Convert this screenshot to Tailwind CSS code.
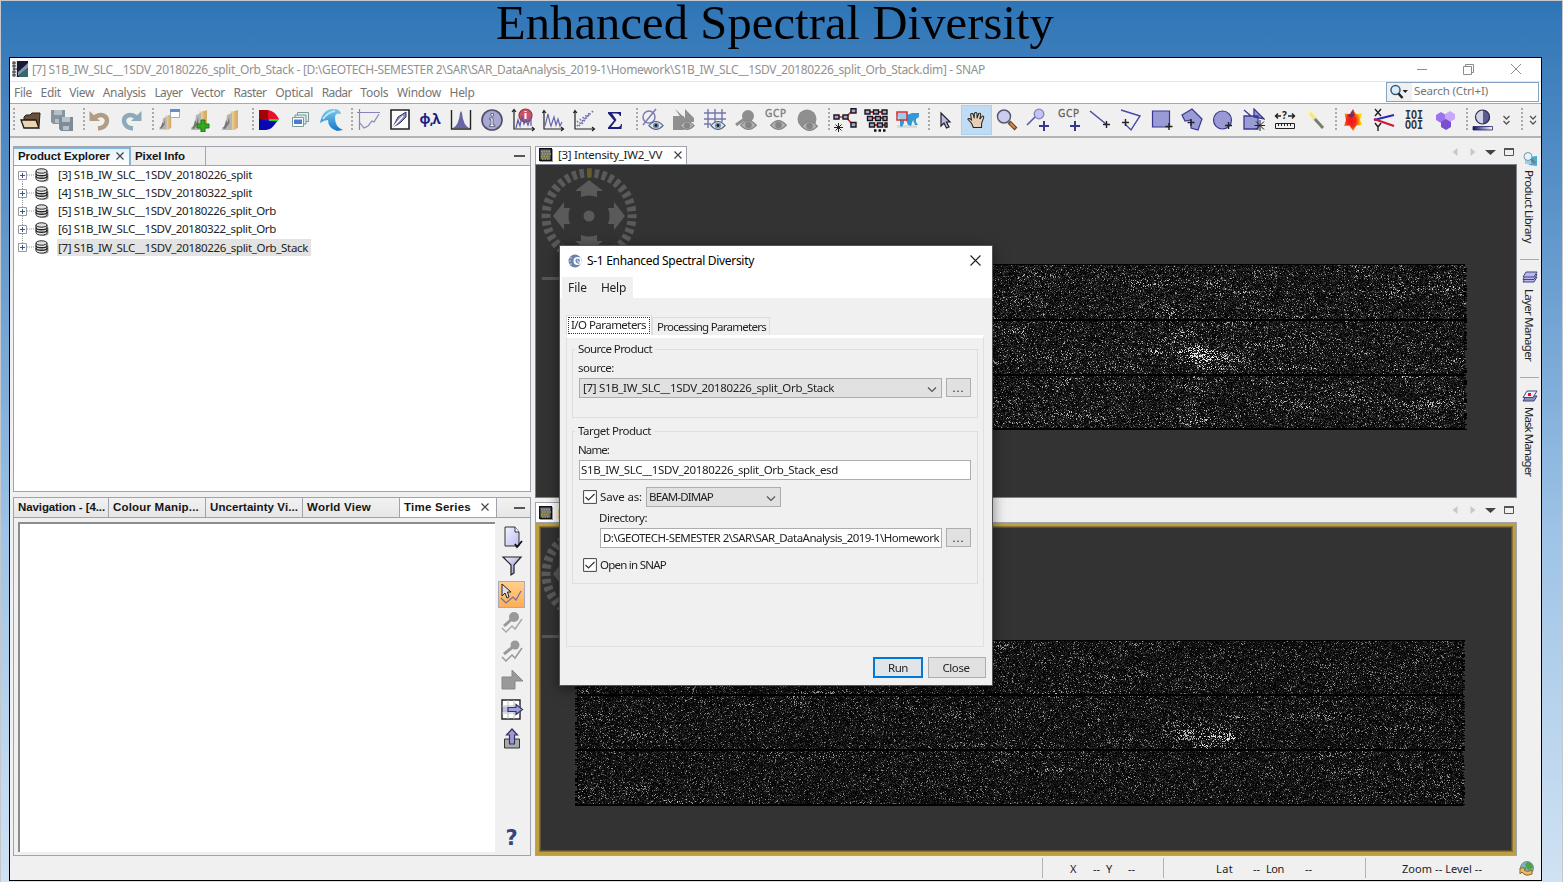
<!DOCTYPE html>
<html lang="en">
<head>
<meta charset="utf-8">
<title>Enhanced Spectral Diversity</title>
<script src="https://cdn.jsdelivr.net/npm/@tailwindcss/browser@4"></script>
</head>
<body class="h-[882px] w-[1563px] overflow-hidden font-['Noto_Sans','Open_Sans',sans-serif] text-[11.5px] text-[#222] whitespace-nowrap">
<svg class="absolute h-0 w-0">
  <defs>
    <linearGradient id="fold" x1="0" y1="0" x2="1" y2="0"><stop offset="0" stop-color="#f5deb0"/><stop offset="1" stop-color="#d9b06a"/></linearGradient>
    <linearGradient id="lav" x1="0" y1="0" x2="1" y2="1"><stop offset="0" stop-color="#f4f4ff"/><stop offset="1" stop-color="#8888c8"/></linearGradient>
    <linearGradient id="page" x1="0" y1="0" x2="1" y2="1"><stop offset="0" stop-color="#f4f4ff"/><stop offset="1" stop-color="#bcbcf0"/></linearGradient>
    <linearGradient id="bar" x1="0" y1="0" x2="1" y2="0"><stop offset="0" stop-color="#0b0b6a"/><stop offset="1" stop-color="#fff"/></linearGradient>
    <linearGradient id="wavec" x1="0" y1="0" x2="0" y2="1"><stop offset="0" stop-color="#7cc8f0"/><stop offset="1" stop-color="#1478c8"/></linearGradient>
    <radialGradient id="star" cx=".4" cy=".55" r=".55"><stop offset="0" stop-color="#f01020"/><stop offset=".5" stop-color="#f03018"/><stop offset="1" stop-color="#ffd800"/></radialGradient>
  </defs>
  <symbol id="eye" viewBox="0 0 14 10"><path d="M.5 5.2Q7-2.5 13.5 5.2Q7 12 .5 5.2Z" fill="#dfe8f0" stroke="#50667e"/><circle cx="7" cy="5" r="2.8" fill="#7d96b0"/><circle cx="7" cy="5" r="1.3" fill="#10202e"/></symbol>
  <symbol id="eyeg" viewBox="0 0 14 10"><path d="M.5 5.2Q7-2.5 13.5 5.2Q7 12 .5 5.2Z" fill="#b0b0b0" stroke="#858585"/><circle cx="7" cy="5" r="2.8" fill="#858585"/></symbol>
  <symbol id="db" viewBox="0 0 14 14"><path d="M3 4Q13 8 13.500 5V12Q12 15 5 13Z" fill="#999"/><path d="M1 3V10.500C1 14 12 14 12 10.500V3Z" fill="#e8e8e8" stroke="#222"/><path d="M1 5.500C1 8.500 12 8.500 12 5.500M1 8C1 11 12 11 12 8" fill="none" stroke="#222" stroke-width="1.300"/><ellipse cx="6.500" cy="3" rx="5.500" ry="2.200" fill="#ddd" stroke="#222"/></symbol>
  <symbol id="prod" viewBox="0 0 14 14"><path d="M1 1H14V14H1Z" fill="#999"/><path d="M.7.7H12.300V12.300H.7Z" fill="#6c6c88" stroke="#111" stroke-width="1.400"/><path d="M2 3.500H11M3 6H12M2 8.500H10M3 11H11" stroke="#a9a43a" stroke-width="1.300" stroke-dasharray="1.5 1"/></symbol>
  <symbol id="folder3" viewBox="0 0 24 24"><path d="M13 4L19 2V20L13 22Z" fill="#d6ad6c"/><path d="M11 3L17 4.500V21.500L11 22Z" fill="url(#fold)"/><path d="M3 21Q7 19 8 7L13 5V22H3Z" fill="#b5b5b5"/><path d="M3 20Q6 19 7 12L8.500 15L10 9L10.500 15L6 21Z" fill="#777"/></symbol>
  <symbol id="compass" viewBox="0 0 96 96">
    <circle cx="48" cy="48" r="43" fill="none" stroke="#5a5a5a" stroke-width="9" stroke-dasharray="4.4 3.105" stroke-dashoffset="2.2"/>
    <path d="M46 .5H50.500V9.500H46Z" fill="#665a28"/>
    <g fill="#5a5a5a"><path id="arr" d="M48 12L62 23H56V29Q48 26 40 29V23H34Z"/><use href="#arr" transform="rotate(90 48 48)"/><use href="#arr" transform="rotate(180 48 48)"/><use href="#arr" transform="rotate(270 48 48)"/><circle cx="48" cy="48" r="5.500"/></g>
  </symbol>
</svg>

<div class="relative flex h-[882px] w-[1563px] flex-col border-x border-t border-[#c4c8cc] bg-linear-to-b from-[#2e75b6] via-[#9dc3e6] via-60% to-[#d0e2f3]">
  <h1 class="h-[56px] pl-[495px] font-['Liberation_Serif',serif] text-[48.5px] leading-[44px] text-black"><span class="inline-block" data-w="558">Enhanced Spectral Diversity</span></h1>

  <div class="ml-2 flex h-[824px] w-[1533px] flex-col border-[1.5px] border-black bg-[#f0f0f0]">
    <!-- title bar -->
    <div class="flex h-[24px] shrink-0 items-center border-b border-[#e4e4e4] bg-white pl-0.5 text-[12px] text-[#929292]">
      <svg class="-mt-0.5 mr-[4px] h-4 w-4" viewBox="0 0 16 16"><path fill="#141a38" d="M4 0H16V16H4Z"/><path d="M0 0H5V16H0Z" fill="#ddd"/><path d="M0 2H4M0 5H4M1 8H5M0 11H4M0 14H4M2 0V16" stroke="#333"/><path d="M6 11L16 2V7L6 15Z" fill="#8890a8"/><path d="M7 15Q11 9 16 8V16H7Z" fill="#316a70"/></svg>
      <span class="inline-block" data-w="953">[7] S1B_IW_SLC__1SDV_20180226_split_Orb_Stack - [D:\GEOTECH-SEMESTER 2\SAR\SAR_DataAnalysis_2019-1\Homework\S1B_IW_SLC__1SDV_20180226_split_Orb_Stack.dim] - SNAP</span>
      <svg class="-mt-0.5 ml-auto mr-[18px] h-3 w-[106px]" viewBox="0 0 106 12" fill="none" stroke="#8c8c8c"><path d="M0 6.500H10M46.500 3.500H54.500V11.500H46.500ZM48.500 3.500V1.500H56.500V9.500H54.500M94 1L104 11M104 1L94 11"/></svg>
    </div>
    <!-- menu -->
    <div class="flex h-[22px] shrink-0 items-center border-b border-[#a8a8a8] bg-white pl-[4px] text-[12px] text-[#757575]">
      <div class="flex gap-[8.6px]">
        <span data-w="18">File</span><span data-w="20">Edit</span><span data-w="25">View</span><span data-w="43">Analysis</span><span data-w="28">Layer</span><span data-w="34">Vector</span><span data-w="33">Raster</span><span data-w="38">Optical</span><span data-w="30">Radar</span><span data-w="28">Tools</span><span data-w="44">Window</span><span data-w="25">Help</span>
      </div>
      <div class="-mt-0.5 ml-auto mr-[2px] flex h-[20px] w-[153px] items-center border border-[#84a3c0] bg-white">
        <div class="flex h-full w-[25px] items-center bg-[#f0f0f0]"><svg class="ml-0.5 h-[16px] w-5" viewBox="0 0 20 16"><circle cx="6.500" cy="6" r="4.500" fill="#d8ecfa" stroke="#3c5a74" stroke-width="1.500"/><path d="M9.500 9.500L13.500 14" stroke="#222" stroke-width="2.600"/><path d="M13.500 6H19L16.200 9Z" fill="#222"/></svg></div>
        <span class="-mt-0.5 ml-[2px] text-[11.5px]" data-w="74">Search (Ctrl+I)</span>
      </div>
    </div>
    <!-- tool bar -->
    <div class="flex h-[34px] shrink-0 items-center border-b-2 border-[#b4b4b4] pl-[4px] [&_b]:ml-[5.4px] [&_b]:h-[24px] [&_b]:w-[2px] [&_b]:shrink-0 [&_b]:bg-[repeating-linear-gradient(#aaa_0_2px,transparent_2px_4px)] [&>svg]:mx-[3.4px] [&>svg]:h-6 [&>svg]:w-6 [&>svg]:shrink-0">
      <b class="-ml-px! mr-px"></b>
      <svg viewBox="0 0 24 24"><path d="M5 19V9L7 7H11L13 5H21L20 19Z" fill="#6b503a" stroke="#2a2018"/><path d="M2 12H17L20 20H5Z" fill="#ead6b4" stroke="#1e1812" stroke-width="1.300"/></svg>
      <svg viewBox="0 0 24 24"><path d="M1 2H15V16H3L1 14Z" fill="#8794a0"/><path d="M4 2H12V7H4ZM5 11H11V15H5Z" fill="#b6bec6"/><path d="M9 9H23V23H11L9 21Z" fill="#7e8c99"/><path d="M12 9H20V14H12ZM13 18H19V22H13Z" fill="#b9c1c8"/></svg>
      <b></b>
      <svg viewBox="0 0 24 24" fill="none" stroke="#b39c84" stroke-width="4.500"><path d="M7 9C14 5 19 8 19 13Q18 20 10 20.500"/><path d="M1.500 3V13H12Z" fill="#b39c84" stroke="none"/></svg>
      <svg viewBox="0 0 24 24" fill="none" stroke="#8eaab8" stroke-width="4.500"><path d="M17 9C10 5 5 8 5 13Q6 20 14 20.500"/><path d="M22.500 3V13H12Z" fill="#8eaab8" stroke="none"/></svg>
      <b></b>
      <svg viewBox="0 0 24 24"><use href="#folder3" y="5" x="0" width="18" height="18"/><path d="M13.500 1.500H22.500V9.500H13.500Z" fill="#fff" stroke="#96add6"/><path d="M13 1H23V4H13Z" fill="#638fd2"/></svg>
      <svg viewBox="0 0 24 24"><use href="#folder3" width="24" height="24"/><path d="M13 12H17V16H21V20H17V24H13V20H9V16H13Z" fill="#35a822" stroke="#1d7a12"/></svg>
      <svg viewBox="0 0 24 24"><use href="#folder3" width="24" height="24"/></svg>
      <b></b>
      <svg viewBox="0 0 24 24"><path d="M2 2H11Q18 3 22 11H2Z" fill="#e8102c"/><path d="M2 11H22L18 16H2Z" fill="#1030d8"/><path d="M2 11V22H9Q16 21 19 14Z" fill="#0808b0"/><path d="M12 11H22L21 13H12Z" fill="#20d830"/><path d="M2 2H11V11H2Z" fill="#a00408"/></svg>
      <svg viewBox="0 0 24 24" stroke="#7a9a96"><path d="M9.500 4.500H20.500V13.500H9.500Z" fill="#e4efee"/><path d="M7 7H18V16H7Z" fill="#d8e9e6"/><path d="M4.500 9.500H15.500V18.500H4.500Z" fill="#fff"/><path d="M6 11.500H14V16H6Z" fill="#4a7ad8" stroke="none"/></svg>
      <svg viewBox="0 0 24 24"><path d="M1 15Q4 0 15 1Q21 1 22 6Q16 4 16 10Q16 19 24 22L18 23Q9 20 9 12Q5 12 1 15Z" fill="url(#wavec)"/><path d="M4 11Q9 4 16 3" stroke="#b8e6fa" fill="none" stroke-width="2"/></svg>
      <b></b>
      <svg viewBox="0 0 24 24" fill="none" stroke="#8585bb" stroke-width="1.200"><path d="M2.500 1V22M0 4.500H23M3 15L7 20L11 18L15 13L17 14L22 6"/></svg>
      <svg viewBox="0 0 24 24"><path d="M3 2H21V21H3Z" fill="#fff" stroke="#222" stroke-width="1.600"/><path d="M5 19L10 9L18 4V9L12 15Z" fill="#8c8cc0" stroke="#363660"/><path d="M5 19L15 8" stroke="#fff" stroke-width="1.500"/></svg>
      <svg viewBox="0 0 24 24"><text x="12" y="15.500" text-anchor="middle" font-size="13.500" font-weight="bold" fill="#1c1c80" textLength="21">φ,λ</text></svg>
      <svg viewBox="0 0 24 24"><path d="M2.500 2V21H21.500V2" fill="none" stroke="#222" stroke-width="1.400"/><path d="M4 20Q10 17 11 5L12 3L13 5Q14 17 20 20Z" fill="#6666a4"/></svg>
      <svg viewBox="0 0 24 24"><circle cx="12" cy="12" r="10" fill="#a8a8d4" stroke="#4e4e66" stroke-width="1.600"/><path d="M9.500 10H13V17H15V18.500H9.500V17H11V11.500H9.500ZM11 5.500H13.500V8H11Z" fill="#fff" stroke="#44445e" stroke-width=".7"/></svg>
      <svg viewBox="0 0 24 24" fill="none" stroke="#222" stroke-width="1.200"><path d="M3 2V21H23M1 4L3 1.500L5 4M21 19L23.500 21L21 23"/><circle cx="14.500" cy="7.500" r="6.500" fill="#cc5268" stroke="#9d3146"/><path d="M14.500 5V11M14.500 3V4" stroke="#fff" stroke-width="2"/><path d="M5 20L7 12L9 18L11 8L13 16L15 12L17 17L20 9V18" stroke="#5a5aa8"/></svg>
      <svg viewBox="0 0 24 24" fill="none" stroke="#222" stroke-width="1.200"><path d="M3 3V21H22M1.500 5L3 2.500L5 5M20 19L22.500 21L20 23"/><path d="M4 18L7 6L9 15L10 18L13 9L15 17L17 11L19 18L21 14" stroke="#6868ac"/></svg>
      <svg viewBox="0 0 24 24" fill="none" stroke="#222" stroke-width="1.200"><path d="M3 3V21H22M1.500 5L3 2.500L5 5M20 19L22.500 21L20 23"/><path d="M5 18L21 3M7 18L17 7M5 14L18 5M10 16L14 10" stroke="#7070b8" stroke-width="1.800" stroke-dasharray="1.4 2"/></svg>
      <svg viewBox="0 0 24 24"><path d="M5 4H18V8H17Q16.500 5.500 14 5.500H9L13.500 12L8 19H15Q17.500 19 18 16H19L18.500 21H5V19.500L11 12.500L5 5.500Z" fill="#1c1c7c"/></svg>
      <b></b>
      <svg viewBox="0 0 24 24"><circle cx="8" cy="9" r="6" fill="none" stroke="#7c7cb2" stroke-width="1.500"/><path d="M2 17L15 1" stroke="#7c7cb2" stroke-width="1.500"/><use href="#eye" x="7" y="12" width="16" height="11"/></svg>
      <svg viewBox="0 0 24 24"><path d="M1 8H12V22H1ZM3 1L13 10V1L22 10V14H12Z" fill="#909090"/><use href="#eyeg" x="7" y="12" width="16" height="11"/></svg>
      <svg viewBox="0 0 24 24"><path d="M5 1V20M12 1V14M19 1V14M1 5H23M1 11H23M1 16H8" stroke="#7474ac" stroke-width="1.400"/><use href="#eye" x="7" y="12" width="16" height="11"/></svg>
      <svg viewBox="0 0 24 24"><path d="M2 17L12 10" stroke="#8e8e8e" stroke-width="3"/><circle cx="14" cy="8" r="6" fill="#8e8e8e"/><use href="#eyeg" x="6" y="11" width="17" height="12"/></svg>
      <svg viewBox="0 0 24 24"><text x="1" y="9" font-size="10" fill="#808080" stroke="#808080" stroke-width=".4" textLength="21">GCP</text><use href="#eyeg" x="6" y="11" width="17" height="12"/></svg>
      <svg viewBox="0 0 24 24"><circle cx="12" cy="11" r="9.500" fill="#8f8f8f"/><use href="#eyeg" x="6" y="12" width="17" height="12"/></svg>
      <b></b>
      <svg viewBox="0 0 24 24"><path d="M4 9H13L19 3M13 9L19 16" stroke="#d8202c" stroke-width="1.600" fill="none"/><g fill="#a8a8d8" stroke="#181818" stroke-width="1.400"><path d="M1 7H6V11H1ZM10 7H15V11H10ZM18 .8H23V5H18ZM18 14.500H23V19H18Z"/></g><path d="M5.500 15V24M1 19.500H10M2.500 16.500L8.500 22.500M8.500 16.500L2.500 22.500" stroke="#222"/></svg>
      <svg viewBox="0 0 24 24"><path d="M2 4H22M4 10H23M6 17H23" stroke="#d8202c" stroke-width="2"/><g fill="#a8a8d8" stroke="#181818" stroke-width="1.400"><path d="M1 2H6V6H1ZM9.500 2H14.500V6H9.500ZM18 2H23V6H18ZM3.500 8.500H8.500V12.500H3.500ZM11.500 8.500H16.500V12.500H11.500ZM19 8.500H23V12.500H19ZM5.500 15H10.500V19H5.500ZM13.500 15H18.500V19H13.500ZM21 15H23V19H21Z"/></g><path d="M10 22.500H23" stroke="#111" stroke-width="2.500" stroke-dasharray="2.500 2"/></svg>
      <svg viewBox="0 0 24 24"><path d="M2 17H22V20H2Z" fill="#d4ddd8"/><path d="M1 5L12 4L13 10L9 12L9 15L7 19L5 18V12ZM12 7L17 5L24 5V9L21 11V14L23 17L20 17L18 12L16 18L13 17L11 12Z" fill="#3599d6"/><path d="M2 4H12V12H2Z" fill="#ddf0f6" fill-opacity=".6" stroke="#d83030" stroke-width="1.500"/></svg>
      <b></b>
      <svg viewBox="0 0 24 24"><path d="M8 5V18L11 15L13.500 20L16 19L13.500 14H17Z" fill="#b8bce8" stroke="#222" stroke-width="1.200"/></svg>
      <div class="ml-px -mr-px flex h-[30px] w-[31px] shrink-0 items-center justify-center border border-[#a8d2f4] bg-[#bfdcf4]"><svg class="h-[20px] w-[22px]" viewBox="0 0 24 24" preserveAspectRatio="none"><path d="M8 21L6 16L2 11Q3 9 6 12L5 5Q7 3 8 6L9 10V4Q11 2 12 4V10L14 4Q16 3 16 6L15 11L18 7Q20 7 19 10L17 16V21Z" fill="#e8d0b8" stroke="#222" stroke-width="1.100"/></svg></div>
      <svg viewBox="0 0 24 24"><path d="M14 14L21 21" stroke="#6b4420" stroke-width="4"/><path d="M15 15L20 20" stroke="#d08a48" stroke-width="2"/><circle cx="9" cy="8.500" r="6.500" fill="#ccccf0" stroke="#58586e" stroke-width="1.500"/></svg>
      <svg viewBox="0 0 24 24"><path d="M1 17L10 8" stroke="#5858a0" stroke-width="1.600"/><circle cx="13" cy="6" r="4.800" fill="#c4c4f4" stroke="#8484b4" stroke-width="1.300"/><path d="M18 13V23M13 18H23" stroke="#38388c" stroke-width="2"/></svg>
      <svg viewBox="0 0 24 24"><text x="2" y="9" font-size="10" fill="#606060" stroke="#606060" stroke-width=".3" textLength="21">GCP</text><path d="M19 13V23M14 18H24" stroke="#38388c" stroke-width="2"/></svg>
      <svg viewBox="0 0 24 24"><path d="M3 3L19 16" stroke="#4a4aa8" stroke-width="1.500"/><path d="M19.500 13V20M16 16.500H23" stroke="#222" stroke-width="1.400"/></svg>
      <svg viewBox="0 0 24 24"><path d="M3 2L22 8L13 22L7 16" stroke="#4a4aa8" stroke-width="1.400" fill="none"/><path d="M7.500 11V18M4 14.500H11" stroke="#222" stroke-width="1.400"/></svg>
      <svg viewBox="0 0 24 24"><path d="M3.500 3H20.500V19H3.500Z" fill="#9a9ad4" stroke="#383894" stroke-width="1.200"/><path d="M20 15V22M16.500 18.500H23.500" stroke="#222" stroke-width="1.400"/></svg>
      <svg viewBox="0 0 24 24"><path d="M3 7L13 1L23 11L19 22L12 20V12L6 13Z" fill="#9a9ad4" stroke="#383894" stroke-width="1.200"/><path d="M12 11V18M8.500 14.500H15.500" stroke="#222" stroke-width="1.400"/></svg>
      <svg viewBox="0 0 24 24"><circle cx="12.500" cy="12" r="9" fill="#9a9ad4" stroke="#383894" stroke-width="1.200"/><path d="M18.500 14V21M15 17.500H22" stroke="#222" stroke-width="1.400"/></svg>
      <svg viewBox="0 0 24 24"><path d="M3 8H17V21H3ZM13 1V9L23 11ZM3 2L10 8" fill="#9a9ad4" stroke="#383894" stroke-width="1.300"/><path d="M19 12V23M13.500 17.500H24M15 13.500L23 21.500M23 13.500L15 21.500" stroke="#222"/></svg>
      <svg viewBox="0 0 24 24" fill="none" stroke="#222"><path d="M3 8H9M16 8H23M6 5.500L3.500 8L6 10.500M20 5.500L22.500 8L20 10.500" stroke-width="1.400"/><path d="M3.500 15.500H22.500V20.500H3.500ZM6.500 15V18M9.500 15V18M12.500 15V18M15.500 15V18M18.500 15V18"/><text x="12.500" y="11" text-anchor="middle" font-size="10" fill="#222" stroke="none" font-weight="bold">?</text></svg>
      <svg viewBox="0 0 24 24"><path d="M11 10L20 20" stroke="#778065" stroke-width="3"/><circle cx="8" cy="6" r="4" fill="#fbf5b8" opacity=".8"/><path d="M7 5L12 11" stroke="#f0e68c" stroke-width="3"/></svg>
      <b></b>
      <svg viewBox="0 0 24 24"><path d="M12 1L15 6L21 5.500L19 11.500L21 17L15.500 17.500L12 23L8.500 17.500L3 18L5 12L3.500 5.500L9 6Z" fill="url(#star)"/><path d="M12 1L14 7L10 10L6 7L9 6Z" fill="#6a1878" opacity=".75"/></svg>
      <svg viewBox="0 0 24 24"><path d="M22 7L2 12" stroke="#2828b8" stroke-width="2"/><path d="M2 11L22 18" stroke="#d01830" stroke-width="2.200"/><path d="M3 1L9 8M9 1L3 8M3 15L6 19L9 15M6 19V23" fill="none" stroke="#222" stroke-width="1.400"/></svg>
      <svg viewBox="0 0 24 24"><g font-family="Liberation Mono" font-size="12.500" font-weight="bold" fill="#333"><text x="3" y="11" textLength="18" lengthAdjust="spacingAndGlyphs">IOI</text><text x="3" y="21" textLength="18" lengthAdjust="spacingAndGlyphs">OOI</text></g></svg>
      <svg viewBox="0 0 24 24"><path d="M8 4L13 7V12L8 15L3 12V7Z" fill="#9c72ee"/><path d="M17 3L22 6V11L17 14L12 11V6Z" fill="#c8a8fa"/><path d="M13 11L18 14V19L13 22L8 19V14Z" fill="#7a4ed0"/></svg>
      <b></b>
      <svg viewBox="0 0 24 24"><path d="M12 2A7 7 0 0 0 12 16Z" fill="#d2d2e4"/><path d="M12 2A7 7 0 0 1 12 16Z" fill="#5c5c94"/><circle cx="11.500" cy="9" r="7" fill="none" stroke="#282858" stroke-width="1.200"/><path d="M2 18.500H21.500V22H2Z" fill="url(#bar)" stroke="#222266" stroke-width=".8"/></svg>
      <svg class="mx-0!" viewBox="0 0 24 24" fill="none" stroke="#555" stroke-width="1.300"><path d="M4.500 8L7.500 11L10.500 8M4.500 13L7.500 16L10.500 13"/></svg>
      <b class="-ml-0.5!"></b>
      <svg class="mx-0! h-6 w-4!" viewBox="0 0 16 24" fill="none" stroke="#555" stroke-width="1.300"><path d="M7 8L10 11L13 8M7 13L10 16L13 13"/></svg>
    </div>

    <!-- work area -->
    <div class="flex h-[719px] shrink-0 gap-[4px] pl-[3px] pt-[8px]">
      <div class="flex w-[518px] shrink-0 flex-col gap-[5px]">
        <section class="flex h-[346px] flex-col border border-[#a0a3ab] bg-white">
          <div class="flex h-[19px] shrink-0 items-center border-b border-[#a0a3ab] bg-[#efefef] font-['Liberation_Sans',sans-serif] text-[11.5px] font-bold text-[#151515]">
            <div class="flex h-full w-[117px] items-center border-r-2 border-t-2 border-[#82b4dc] bg-linear-to-b from-[#e4f1fd] to-white pl-[4px]"><span data-w="92">Product Explorer</span><svg class="-mt-0.5 ml-[6px] h-2 w-2" viewBox="0 0 8 8"><path d="M.5.5L7.500 7.500M7.500.5L.5 7.500" stroke="#444" stroke-width="1.200"/></svg></div>
            <div class="flex h-full w-[75px] items-center border-r border-[#a0a3ab] pl-[4px] pt-px"><span data-w="50">Pixel Info</span></div>
            <div class="ml-auto mr-[5px] h-[2px] w-[11px] bg-[#555]"></div>
          </div>
          <div class="flex flex-col [&>div]:flex [&>div]:h-[18px] [&>div]:items-center [&>div]:pl-[4px]">
            <div><svg class="h-[18px] w-[17px]" viewBox="0 0 17 18" fill="none"><path d="M4.500 13V18M9 9H16" stroke="#999" stroke-dasharray="1 1"/><path d="M.5 5.500H8.500V13.500H.5Z" stroke="#999" fill="#fff"/><path d="M2 9.500H7M4.500 7V12" stroke="#335599"/></svg><svg class="mr-[6px] h-3.5 w-3.5"><use href="#db"/></svg><span class="px-[3px]" data-w="194">[3] S1B_IW_SLC__1SDV_20180226_split</span></div>
            <div><svg class="h-[18px] w-[17px]" viewBox="0 0 17 18" fill="none"><path d="M4.500 0V18M9 9H16" stroke="#999" stroke-dasharray="1 1"/><path d="M.5 5.500H8.500V13.500H.5Z" stroke="#999" fill="#fff"/><path d="M2 9.500H7M4.500 7V12" stroke="#335599"/></svg><svg class="mr-[6px] h-3.5 w-3.5"><use href="#db"/></svg><span class="px-[3px]" data-w="194">[4] S1B_IW_SLC__1SDV_20180322_split</span></div>
            <div><svg class="h-[18px] w-[17px]" viewBox="0 0 17 18" fill="none"><path d="M4.500 0V18M9 9H16" stroke="#999" stroke-dasharray="1 1"/><path d="M.5 5.500H8.500V13.500H.5Z" stroke="#999" fill="#fff"/><path d="M2 9.500H7M4.500 7V12" stroke="#335599"/></svg><svg class="mr-[6px] h-3.5 w-3.5"><use href="#db"/></svg><span class="px-[3px]" data-w="218">[5] S1B_IW_SLC__1SDV_20180226_split_Orb</span></div>
            <div><svg class="h-[18px] w-[17px]" viewBox="0 0 17 18" fill="none"><path d="M4.500 0V18M9 9H16" stroke="#999" stroke-dasharray="1 1"/><path d="M.5 5.500H8.500V13.500H.5Z" stroke="#999" fill="#fff"/><path d="M2 9.500H7M4.500 7V12" stroke="#335599"/></svg><svg class="mr-[6px] h-3.5 w-3.5"><use href="#db"/></svg><span class="px-[3px]" data-w="218">[6] S1B_IW_SLC__1SDV_20180322_split_Orb</span></div>
            <div><svg class="h-[18px] w-[17px]" viewBox="0 0 17 18" fill="none"><path d="M4.500 0V6M9 9H16" stroke="#999" stroke-dasharray="1 1"/><path d="M.5 5.500H8.500V13.500H.5Z" stroke="#999" fill="#fff"/><path d="M2 9.500H7M4.500 7V12" stroke="#335599"/></svg><svg class="mr-[8px] h-3.5 w-3.5"><use href="#db"/></svg><span class="bg-[#e3e3e3] pl-px pr-[3px] leading-[17px]" data-w="250">[7] S1B_IW_SLC__1SDV_20180226_split_Orb_Stack</span></div>
          </div>
        </section>
        <section class="flex h-[359px] flex-col border border-[#a0a3ab]">
          <div class="flex h-[20px] shrink-0 items-center border-b border-[#a0a3ab] bg-linear-to-b from-[#f2f2f2] to-[#e6e6e6] font-['Liberation_Sans',sans-serif] text-[11.5px] font-bold text-[#151515] [&>div]:flex [&>div]:h-full [&>div]:shrink-0 [&>div]:items-center [&>div]:border-r [&>div]:border-[#a0a3ab] [&>div]:pl-[4px]">
            <div class="w-[95px]"><span data-w="87">Navigation - [4...</span></div>
            <div class="w-[97px]"><span data-w="86">Colour Manip...</span></div>
            <div class="w-[97px]"><span data-w="88">Uncertainty Vi...</span></div>
            <div class="w-[97px]"><span data-w="64">World View</span></div>
            <div class="w-[97px] bg-white"><span data-w="67">Time Series</span><svg class="-mt-0.5 ml-[10px] h-2 w-2" viewBox="0 0 8 8"><path d="M.5.5L7.500 7.500M7.500.5L.5 7.500" stroke="#444" stroke-width="1.200"/></svg></div>
            <span class="ml-auto mr-[5px] h-[2px] w-[11px] bg-[#555]"></span>
          </div>
          <div class="flex flex-1 pb-[3px] pl-[4px] pt-[4px]">
            <div class="w-[477px] shrink-0 border-l-2 border-t-2 border-[#8c8c8c] bg-white"></div>
            <div class="ml-[3px] flex w-[27px] flex-col items-center gap-[5px] [&>svg]:h-6 [&>svg]:w-6 [&>svg]:shrink-0">
              <svg class="mt-[3px]" viewBox="0 0 24 24"><path d="M5 2H15L19 7V21H5Z" fill="url(#page)" stroke="#333"/><path d="M15 2V7H19" fill="#fff" stroke="#333"/><path d="M15 19L17 22L22 16" fill="none" stroke="#111" stroke-width="1.800"/></svg>
              <svg viewBox="0 0 24 24"><path d="M3 3H21L14 11V19L11 21V11Z" fill="url(#lav)" stroke="#222" stroke-width="1.200"/></svg>
              <div class="-my-[2px] flex h-[27px] w-[27px] shrink-0 items-center justify-center border border-[#aab] bg-linear-to-b from-[#ffcf8c] to-[#ffad55]"><svg class="h-6 w-6" viewBox="0 0 24 24"><path d="M1 15L6 20L13 14L16 17L21 8" fill="none" stroke="#68709c" stroke-width="1.200"/><path d="M2 1V13L5 10L7 15L9 14L7.500 9H11Z" fill="#dde" stroke="#222"/></svg></div>
              <svg class="-mt-px" viewBox="0 0 24 24"><path d="M2 18L6 22L12 16L15 19L22 9" fill="none" stroke="#aaa" stroke-width="1.500"/><circle cx="14" cy="7" r="5" fill="#999"/><path d="M4 16L13 8" stroke="#999" stroke-width="3"/></svg>
              <svg viewBox="0 0 24 24"><path d="M2 18L6 22L12 16L15 19L22 9" fill="none" stroke="#999" stroke-width="1.500"/><circle cx="15" cy="6" r="4.500" fill="#999"/><path d="M4 15L14 7" stroke="#999" stroke-width="3"/></svg>
              <svg viewBox="0 0 24 24"><path d="M2 9H12V2L23 13H15V21H2Z" fill="#999" stroke="#888"/></svg>
              <svg viewBox="0 0 24 24"><path d="M2 3H20V22H2Z" fill="#fff" stroke="#222" stroke-width="1.400"/><path d="M2 9H20M2 16H20M8 3V22M14 3V22" stroke="#bbb"/><path d="M3 9.500H8V15H3Z" fill="#bcbcf0"/><path d="M8 10.500H16V7.500L22.500 12.500L16 17.500V14.500H8Z" fill="#a0a0e0" stroke="#333366" stroke-width="1.200"/></svg>
              <svg viewBox="0 0 24 24"><path d="M4.500 13H19.500V22H4.500Z" fill="#aaa" stroke="#333"/><path d="M12 3L17.500 9H14.500V18H9.500V9H6.500Z" fill="#9a9ad8" stroke="#33335a" stroke-width="1.200"/></svg>
              <span class="mt-auto mb-[2px] font-['DejaVu_Sans',sans-serif] text-[21px] font-bold leading-[24px] text-[#34467a]">?</span>
            </div>
          </div>
        </section>
      </div>

      <div class="flex w-[982px] shrink-0 flex-col">
        <div class="flex h-[18px] items-center justify-between">
          <div class="flex h-[19px] w-[152px] items-center self-start border border-b-0 border-[#a0a3ab] bg-white pb-[2px] pl-[3px]"><svg class="h-3.5 w-3.5"><use href="#prod"/></svg><span class="ml-[5px]" data-w="104">[3] Intensity_IW2_VV</span><svg class="ml-[12px] h-2 w-2" viewBox="0 0 8 8"><path d="M.5.5L7.500 7.500M7.500.5L.5 7.500" stroke="#444" stroke-width="1.200"/></svg></div>
          <svg class="-mt-1.5 mr-[2px] h-3 w-[64px]" viewBox="0 0 64 12"><path d="M6.500 2V10L1.500 6ZM19.500 2V10L24.500 6Z" fill="#c8c8c8"/><path d="M34 4H45L39.500 9Z" fill="#444"/><path d="M53.500 2.500H62.500V9.500H53.500Z" fill="none" stroke="#555"/><path d="M53 3H63" stroke="#555" stroke-width="2"/></svg>
        </div>
        <div class="relative h-[334px] border border-[#7b828c] bg-[#333]">
          <canvas class="block" id="viewTop" width="980" height="332"></canvas>
          <svg class="absolute left-[5px] top-[3px] h-24 w-24"><use href="#compass"/></svg>
          <div class="absolute left-[6px] top-[112px] h-[3px] w-[94px] bg-[#555]"></div>
        </div>
        <div class="mt-[4px] flex h-[20px] items-center justify-between">
          <div class="flex h-[20px] w-[152px] items-center border border-b-0 border-[#a0a3ab] bg-white pl-[3px]"><svg class="h-3.5 w-3.5"><use href="#prod"/></svg><span class="ml-[5px]" data-w="104">[4] Intensity_IW2_VV</span></div>
          <svg class="-mt-1 mr-[2px] h-3 w-[64px]" viewBox="0 0 64 12"><path d="M6.500 2V10L1.500 6ZM19.500 2V10L24.500 6Z" fill="#c8c8c8"/><path d="M34 4H45L39.500 9Z" fill="#444"/><path d="M53.500 2.500H62.500V9.500H53.500Z" fill="none" stroke="#555"/><path d="M53 3H63" stroke="#555" stroke-width="2"/></svg>
        </div>
        <div class="relative h-[334px] border border-[#a0a3ab] bg-[#333]">
          <canvas class="block" id="viewBottom" width="980" height="332"></canvas>
          <svg class="absolute left-[5px] top-[3px] h-24 w-24"><use href="#compass"/></svg>
          <div class="absolute left-[6px] top-[112px] h-[3px] w-[94px] bg-[#555]"></div>
          <div class="absolute inset-0 border-[3px] border-[#bd9f3e] shadow-[inset_0_0_0_1px_#8a7638,inset_0_0_0_2px_#5c5236]"></div>
        </div>
      </div>

      <div class="-ml-[3px] flex w-[22px] shrink-0 flex-col items-center pl-px pt-[5px] text-[11.5px] [&_span]:[writing-mode:vertical-rl]">
        <svg class="h-4 w-4 shrink-0" viewBox="0 0 16 16"><path d="M6 6L15 5V15L7 14Z" fill="#4ea8d8"/><path d="M3 8H9V13H3Z" fill="#9ccde8"/><circle cx="6" cy="5.500" r="4" fill="#e2f2fa" stroke="#7895a5"/><path d="M9 8L13 12" stroke="#777" stroke-width="2"/></svg>
        <div class="flex h-[92px] w-full items-start justify-center pt-[3px]"><span data-h="73">Product Library</span></div>
        <div class="h-px w-[19px] shrink-0 bg-[#aaa]"></div>
        <svg class="mt-[10px] h-4 w-4 shrink-0" viewBox="0 0 16 16" fill="#b8b8ec" stroke="#44447e"><path d="M1 12L4 7H15L12 12Z"/><path d="M1 9.500L4 4.500H15L12 9.500Z"/><path d="M1 7L4 2H15L12 7Z"/></svg>
        <div class="flex h-[91px] w-full items-start justify-center pt-[3px]"><span data-h="72">Layer Manager</span></div>
        <div class="h-px w-[19px] shrink-0 bg-[#aaa]"></div>
        <svg class="mt-[10px] h-4 w-4 shrink-0" viewBox="0 0 16 16" stroke="#44447e"><path d="M1 13L4 8H15L12 13Z" fill="#8c8cc4"/><path d="M1 9.500L5 3H15L11 9.500Z" fill="#eeeefa"/><path d="M6 5H9V8H6Z" fill="#e01818" stroke="none"/></svg>
        <div class="flex h-[91px] w-full items-start justify-center pt-[3px]"><span data-h="69">Mask Manager</span></div>
      </div>
    </div>

    <!-- status bar -->
    <div class="flex h-[22px] items-center pl-[1032px] text-[11px] [&>div]:flex [&>div]:h-[20px] [&>div]:shrink-0 [&>div]:items-center [&>div]:border-l [&>div]:border-[#b4b4b4] [&>div]:pt-[2px]">
      <div class="w-[121px] pl-[27px]"><span class="w-[23px]">X</span><span class="w-[13px]">--</span><span class="w-[22px]">Y</span><span>--</span></div>
      <div class="w-[202px] pl-[52px]"><span data-w="17">Lat</span><span class="ml-[20px] w-[13px]">--</span><span data-w="18">Lon</span><span class="ml-[21px]">--</span></div>
      <div class="w-[152px] pl-[36px]"><span data-w="80">Zoom -- Level --</span></div>
      <svg class="ml-[2px] h-4 w-4 shrink-0" viewBox="0 0 16 16"><circle cx="8" cy="8" r="6.500" fill="#78b4c4" stroke="#74939a"/><path d="M8 2Q14 2 14 8L9 10L6 5Z" fill="#4fa344"/><path d="M1 8H7L5 10Q8 13 13 10V14Q6 17 3 12L1 14Z" fill="#e8bc68" stroke="#8c6428"/></svg>
    </div>
  </div>

  <!-- dialog -->
  <div class="absolute left-[558px] top-[244px] flex h-[441px] w-[434px] flex-col border border-[#555] bg-[#f0f0f0] shadow-[0_3px_12px_rgba(0,0,0,.5)]">
    <div class="flex h-[31px] shrink-0 items-center bg-white pb-[2px] pl-[8px] text-[12px] text-black">
      <svg class="mr-[5px] h-[14px] w-[14px]" viewBox="0 0 14 14"><circle cx="7" cy="7" r="6.500" fill="#6b83ac"/><circle cx="9.500" cy="7" r="4" fill="#fff"/><path d="M12 7H8Q8 5 9.500 5T11.500 7M8 7Q8.500 9.500 11.500 9" fill="none" stroke="#6b83ac" stroke-width="1.200"/><path d="M2 4H4M1 7H3M2 10H4" stroke="#c0cade"/></svg>
      <span data-w="167">S-1 Enhanced Spectral Diversity</span>
      <svg class="ml-auto mr-[11px] h-[11px] w-[11px]" viewBox="0 0 11 11"><path d="M.5.5L10.500 10.500M10.500.5L.5 10.500" stroke="#222" stroke-width="1.100"/></svg>
    </div>
    <div class="h-[21px] shrink-0 bg-white pl-[2px] text-[12px]"><div class="flex h-[21px] w-[71px] items-center gap-[14px] bg-[#f0f0f0] pl-[6px]"><span data-w="19">File</span><span data-w="25">Help</span></div></div>
    <div class="mt-[17px] flex h-[20px] shrink-0 items-end pl-[6px]">
      <div class="flex h-[20px] w-[86px] items-center border border-b-0 border-[#dcdcdc] bg-white p-px"><div class="flex h-[17px] w-[82px] items-center border border-dotted border-[#333] pb-px pl-[2px]"><span data-w="75">I/O Parameters</span></div></div>
      <div class="flex h-[18px] w-[118px] items-center border border-b-0 border-[#dcdcdc] pl-[4px]"><span data-w="109">Processing Parameters</span></div>
    </div>
    <div class="ml-[6px] flex h-[312px] w-[418px] shrink-0 flex-col border border-t-[3px] border-[#e0e0e0] border-t-white px-[5px] pt-[4px]">
      <fieldset class="h-[76px] w-[406px] border border-[#dedede] pl-[6px]">
        <legend class="-ml-[4px] h-[14px] px-[3px] leading-[14px]"><span class="inline-block" data-w="74">Source Product</span></legend>
        <div class="-ml-px h-[20px] pt-[4px] leading-[16px]"><span class="inline-block" data-w="36">source:</span></div>
        <div class="mt-[2px] flex gap-[4px]">
          <div class="flex h-[20px] w-[363px] items-center border border-[#adadad] bg-[#e1e1e1] pl-[3px]"><span data-w="251">[7] S1B_IW_SLC__1SDV_20180226_split_Orb_Stack</span><svg class="ml-auto mr-[4px] mt-1 h-[6px] w-[10px]" viewBox="0 0 10 6"><path d="M1 .5L5 4.500L9 .5" fill="none" stroke="#555" stroke-width="1.200"/></svg></div>
          <div class="flex h-[19px] w-[25px] items-center justify-center border border-[#adadad] bg-[#e1e1e1] tracking-[1px]">...</div>
        </div>
      </fieldset>
      <fieldset class="mt-[6px] h-[160px] w-[406px] border border-[#dedede] pl-[6px]">
        <legend class="-ml-[4px] h-[14px] px-[3px] leading-[14px]"><span class="inline-block" data-w="73">Target Product</span></legend>
        <div class="-ml-px h-[20px] pt-[4px] leading-[16px]"><span class="inline-block" data-w="31">Name:</span></div>
        <div class="mt-[2px] flex h-[20px] w-[392px] items-center border border-[#adadad] bg-white pl-px"><span data-w="257">S1B_IW_SLC__1SDV_20180226_split_Orb_Stack_esd</span></div>
        <div class="mt-[7px] flex h-[20px] items-center pl-[4px]">
          <svg class="mr-[3px] h-[14px] w-[14px]" viewBox="0 0 14 14"><path d="M.6.6H13.400V13.400H.6Z" fill="#fff" stroke="#444"/><path d="M2.500 7L5.500 10L11.500 4" fill="none" stroke="#333" stroke-width="1.200"/></svg>
          <span data-w="42">Save as:</span>
          <div class="ml-[4px] flex h-[20px] w-[135px] items-center border border-[#adadad] bg-[#e1e1e1] pl-[2px]"><span data-w="64">BEAM-DIMAP</span><svg class="ml-auto mr-[4px] mt-1 h-[6px] w-[10px]" viewBox="0 0 10 6"><path d="M1 .5L5 4.500L9 .5" fill="none" stroke="#555" stroke-width="1.200"/></svg></div>
        </div>
        <div class="h-[22px] pl-[20px] pt-[3px] leading-[16px]"><span class="inline-block" data-w="48">Directory:</span></div>
        <div class="-mt-px flex gap-[4px] pl-[21px]">
          <div class="flex h-[20px] w-[342px] items-center border border-[#adadad] bg-white pl-[2px]"><span data-w="336">D:\GEOTECH-SEMESTER 2\SAR\SAR_DataAnalysis_2019-1\Homework</span></div>
          <div class="flex h-[19px] w-[25px] items-center justify-center border border-[#adadad] bg-[#e1e1e1] tracking-[1px]">...</div>
        </div>
        <div class="mt-[7px] flex h-[20px] items-center pl-[4px]">
          <svg class="mr-[3px] h-[14px] w-[14px]" viewBox="0 0 14 14"><path d="M.6.6H13.400V13.400H.6Z" fill="#fff" stroke="#444"/><path d="M2.500 7L5.500 10L11.500 4" fill="none" stroke="#333" stroke-width="1.200"/></svg>
          <span data-w="66">Open in SNAP</span>
        </div>
      </fieldset>
    </div>
    <div class="mt-[10px] flex justify-end gap-[5px] pr-[6px]">
      <div class="flex h-[21px] w-[50px] items-center justify-center border-2 border-[#0078d7] bg-[#e1e5e9]"><span data-w="20">Run</span></div>
      <div class="flex h-[21px] w-[58px] items-center justify-center border border-[#adadad] bg-[#e1e1e1] pr-[2px]"><span data-w="27">Close</span></div>
    </div>
  </div>
</div>

<script>
  // Track each label so that it fills its designed length.
  function fitLabels() {
    for (const el of document.querySelectorAll('[data-w],[data-h]')) {
      el.style.letterSpacing = '0px';
      el.style.flexShrink = 0;
      const r = document.createRange();
      r.selectNodeContents(el);
      const box = r.getBoundingClientRect();
      const vertical = 'h' in el.dataset;
      const want = Number(vertical ? el.dataset.h : el.dataset.w);
      const have = vertical ? box.height : box.width;
      el.style.letterSpacing = (want - have) / el.textContent.length + 'px';
    }
  }
  fitLabels();
  addEventListener('load', () => { fitLabels(); requestAnimationFrame(fitLabels); });
  document.fonts.ready.then(fitLabels);

  // Radar intensity swath: speckle on black with three bursts.
  function swath(id, seed, x0, x1, y0, y1, cuts, gain, cx, cy) {
    const c = document.getElementById(id), g = c.getContext('2d');
    let s = seed;
    const rnd = () => {
      s = (s + 0x6D2B79F5) | 0;
      let t = Math.imul(s ^ (s >>> 15), 1 | s);
      t = (t + Math.imul(t ^ (t >>> 7), 61 | t)) ^ t;
      return ((t ^ (t >>> 14)) >>> 0) / 4294967296;
    };
    const w = x1 - x0, h = y1 - y0;
    const patches = [];
    for (let i = 0; i < 200; i++) patches.push([x0 + rnd() * w, y0 + rnd() * h, 8 + rnd() * 22, 1.5 + rnd() * 3, rnd() * .45 * gain]);
    for (let i = 0; i < 22; i++) patches.push([cx + (rnd() + rnd() - 1) * 45, cy + (rnd() + rnd() - 1) * 18, 6 + rnd() * 10, 2 + rnd() * 3, .35]);
    g.fillStyle = '#050505';
    g.fillRect(x0, y0, w, h);
    const map = new Float32Array(w * h);
    for (const [px, py, rx, ry, a] of patches)
      for (let y = Math.max(y0, Math.floor(py - ry * 2)); y < Math.min(y1, py + ry * 2); y++)
        for (let x = Math.max(x0, Math.floor(px - rx * 2)); x < Math.min(x1, px + rx * 2); x++)
          map[(y - y0) * w + x - x0] += a * Math.exp(-(((x - px) / rx) ** 2) - ((y - py) / ry) ** 2);
    for (let y = y0; y < y1; y++) {
      for (let x = x0; x < x1; x++) {
        const m = Math.min(1, map[(y - y0) * w + x - x0]);
        let v = 2 + rnd() * rnd() * 80 * gain;
        if (rnd() < .09 + m * .28) v = 45 + rnd() * 130 * gain + m * 120;
        v = Math.min(240, v) | 0;
        g.fillStyle = `rgb(${v},${v},${v})`;
        g.fillRect(x, y, rnd() < .6 ? 2 : 1, 1);
        if (v > 60 && y + 1 < y1 && rnd() < .4) { g.globalAlpha = .6; g.fillRect(x, y + 1, 1, 1); g.globalAlpha = 1; }
      }
    }
    g.fillStyle = '#000';
    for (const y of cuts) g.fillRect(x0, y, w, 2);
    g.fillRect(x0, y1 - 2, w, 2);
    g.fillRect(x0, y0, w, 1);
    for (let y = y0; y < y1; y++) {
      if (rnd() < .4) g.fillRect(x0 - 2, y, 3, 1);
      if (rnd() < .3) g.fillRect(x1 - 1, y, 3, 1);
    }
  }
  swath('viewTop', 7, 40, 929, 99, 265, [154, 209], 1, 658, 190);
  swath('viewBottom', 23, 41, 927, 117, 283, [171, 226], .8, 666, 210);
</script>
</body>
</html>
